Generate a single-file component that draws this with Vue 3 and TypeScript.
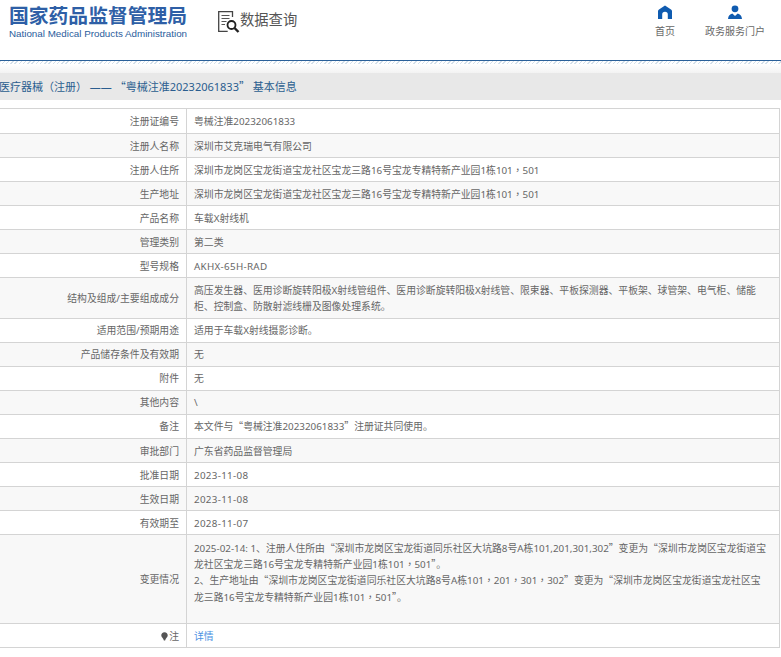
<script setup lang="ts">
interface Row {
  label: string
  lines: string[]
  tall?: boolean
  spaced?: boolean
}

const rows: Row[] = [
  { label: '注册证编号', lines: ['粤械注准20232061833'] },
  { label: '注册人名称', lines: ['深圳市艾克瑞电气有限公司'] },
  { label: '注册人住所', lines: ['深圳市龙岗区宝龙街道宝龙社区宝龙三路16号宝龙专精特新产业园1栋101，501'] },
  { label: '生产地址', lines: ['深圳市龙岗区宝龙街道宝龙社区宝龙三路16号宝龙专精特新产业园1栋101，501'] },
  { label: '产品名称', lines: ['车载X射线机'] },
  { label: '管理类别', lines: ['第二类'] },
  { label: '型号规格', lines: ['AKHX-65H-RAD'], spaced: true },
  {
    label: '结构及组成/主要组成成分',
    lines: ['高压发生器、医用诊断旋转阳极X射线管组件、医用诊断旋转阳极X射线管、限束器、平板探测器、平板架、球管架、电气柜、储能柜、控制盒、防散射滤线栅及图像处理系统。']
  },
  { label: '适用范围/预期用途', lines: ['适用于车载X射线摄影诊断。'] },
  { label: '产品储存条件及有效期', lines: ['无'] },
  { label: '附件', lines: ['无'] },
  { label: '其他内容', lines: ['\\'] },
  { label: '备注', lines: ['本文件与“粤械注准20232061833”注册证共同使用。'] },
  { label: '审批部门', lines: ['广东省药品监督管理局'] },
  { label: '批准日期', lines: ['2023-11-08'], spaced: true },
  { label: '生效日期', lines: ['2023-11-08'], spaced: true },
  { label: '有效期至', lines: ['2028-11-07'], spaced: true },
  {
    label: '变更情况',
    tall: true,
    lines: [
      '2025-02-14: 1、注册人住所由“深圳市龙岗区宝龙街道同乐社区大坑路8号A栋101,201,301,302”变更为“深圳市龙岗区宝龙街道宝龙社区宝龙三路16号宝龙专精特新产业园1栋101，501”。',
      '2、生产地址由“深圳市龙岗区宝龙街道同乐社区大坑路8号A栋101，201，301，302”变更为“深圳市龙岗区宝龙街道宝龙社区宝龙三路16号宝龙专精特新产业园1栋101，501”。'
    ]
  }
]

const title = '医疗器械（注册） —— “粤械注准20232061833” 基本信息'

// curly quotes and the full-width comma need the CJK glyphs, not the latin ones
const parts = (text: string) =>
  text.split(/([“”，])/).filter(Boolean).map((t) => ({
    t,
    cls: t === '，' ? 'comma' : t === '“' || t === '”' ? 'quote' : ''
  }))
</script>

<template>
  <div class="page">
    <header class="top">
      <div class="logo">
        <div class="logo-cn">国家药品监督管理局</div>
        <div class="logo-en">National Medical Products Administration</div>
      </div>
      <div class="query">
        <svg class="query-icon" viewBox="0 0 22 22" width="22" height="22" fill="none">
          <path d="M14.500 6V.7H.7v19.600h9" stroke="#444" stroke-width="1.300" />
          <path d="M3.500 4.500h8M3.500 7.500h8M3.500 10.500h5M3.500 13.500h3.500" stroke="#555" stroke-width="1.200" />
          <circle cx="13.500" cy="14" r="4" stroke="#222" stroke-width="1.800" />
          <path d="M16.500 17l4 4" stroke="#222" stroke-width="2.400" />
        </svg>
        <span>数据查询</span>
      </div>
      <nav class="nav">
        <a class="nav-item home">
          <svg viewBox="0 0 14 14" width="14" height="14">
            <path d="M7 .5 13 4.500c.7.5 1 1 1 1.800V14H9.800V9.500a2.800 2.800 0 0 0-5.600 0V14H0V6.300c0-.8.300-1.300 1-1.800z" fill="#0f5bb0" />
          </svg>
          <span>首页</span>
        </a>
        <a class="nav-item portal">
          <svg viewBox="0 0 14 14" width="14" height="14">
            <circle cx="7" cy="3.800" r="3.400" fill="#0f5bb0" />
            <path d="M0 14c.3-3.500 2-5 4.300-5.600L7 11l2.700-2.600C12 9 13.700 10.500 14 14z" fill="#0f5bb0" />
          </svg>
          <span>政务服务门户</span>
        </a>
      </nav>
    </header>
    <div class="hatch"></div>
    <div class="fade"></div>
    <h2 class="title">
      <span v-for="(p, i) in parts(title)" :key="i" :class="p.cls">{{ p.t }}</span>
    </h2>
    <table class="info">
      <tbody>
        <tr v-for="row in rows" :key="row.label" :class="{ tall: row.tall, spaced: row.spaced }">
          <td class="label">{{ row.label }}</td>
          <td class="value">
            <div v-for="line in row.lines" :key="line">
              <span v-for="(p, i) in parts(line)" :key="i" :class="p.cls">{{ p.t }}</span>
            </div>
          </td>
        </tr>
        <tr>
          <td class="label">
            <svg class="pin" viewBox="0 0 8 10" width="7" height="9">
              <path d="M4 0C1.700 0 .3 1.600.3 3.600.3 6 2.800 7 3.300 9.500h1.400C5.200 7 7.700 6 7.700 3.600 7.700 1.600 6.300 0 4 0z" fill="#555" />
            </svg>注
          </td>
          <td class="value"><a class="link">详情</a></td>
        </tr>
      </tbody>
    </table>
  </div>
</template>

<style>
html,
body {
  margin: 0;
  background: #fff;
}
</style>

<style scoped>
.page {
  width: 781px;
  height: 657px;
  overflow: hidden;
  font-family: "Noto Sans", "Noto Sans CJK SC", sans-serif;
  color: #666;
  font-size: 9.830px;
}

.quote {
  font-family: "Noto Sans CJK SC", sans-serif;
}

.comma {
  font-family: "Noto Sans CJK TC", sans-serif;
}

.top {
  display: flex;
  height: 60px;
  border-bottom: 1px solid #2a6099;
}

.logo {
  width: 218px;
  padding: 3px 0 0 9px;
  box-sizing: border-box;
}

.logo-cn {
  font-family: "Noto Sans CJK SC", sans-serif;
  font-size: 19.800px;
  line-height: 24px;
  font-weight: 700;
  color: #2e5fa6;
  white-space: nowrap;
}

.logo-en {
  font-family: "Liberation Sans", sans-serif;
  font-size: 9.800px;
  line-height: 12px;
  margin-top: 1px;
  color: #2a5d9c;
  white-space: nowrap;
}

.query {
  display: flex;
  align-items: flex-start;
  padding-top: 11px;
  color: #555;
  font-size: 14.300px;
  line-height: 16px;
  font-family: "Noto Sans CJK SC", sans-serif;
}

.nav {
  margin-left: auto;
  display: flex;
  padding: 5px 16px 0 0;
  font-size: 10px;
}

.nav-item {
  display: flex;
  flex-direction: column;
  align-items: center;
  color: #666;
  line-height: 14px;
}

.nav-item span {
  margin-top: 5px;
}

.home {
  margin-right: 30px;
}

.hatch {
  height: 3px;
  background: repeating-linear-gradient(135deg, #d4e0ea 0 1px, #fff 1px 3px);
}

.fade {
  height: 9px;
  background: linear-gradient(#fff, #f3f3f3);
}

.title {
  margin: 0 0 8px;
  height: 27px;
  background: #e8e8e8;
  font-size: 11px;
  font-weight: 400;
  line-height: 27px;
  color: #2a5d8f;
  text-indent: -1px;
  white-space: pre;
}

.info {
  width: 780px;
  border-collapse: collapse;
  table-layout: fixed;
  border-bottom: 1px solid #d8d8d8;
}

.info td {
  border: 1px solid #d4d4d4;
  border-left: 0;
  line-height: 16.080px;
  padding: 3.500px 10px 3.500px 7px;
  vertical-align: middle;
}

.info tr {
  height: 24px;
}

.info tr:nth-child(even) {
  background: #f8f8f8;
}

.info tr:first-child {
  height: 25px;
}

.spaced .value {
  letter-spacing: 0.3px;
}

.tall .value {
  height: 80px;
  line-height: 16.300px;
  vertical-align: top;
  padding-top: 4.500px;
}

.info .label {
  width: 172px;
  padding-right: 7px;
  text-align: right;
}

.value {
  text-align: left;
  word-break: break-all;
}

.pin {
  margin-right: 1px;
  vertical-align: -1px;
}

.link {
  color: #4a90e2;
}
</style>
